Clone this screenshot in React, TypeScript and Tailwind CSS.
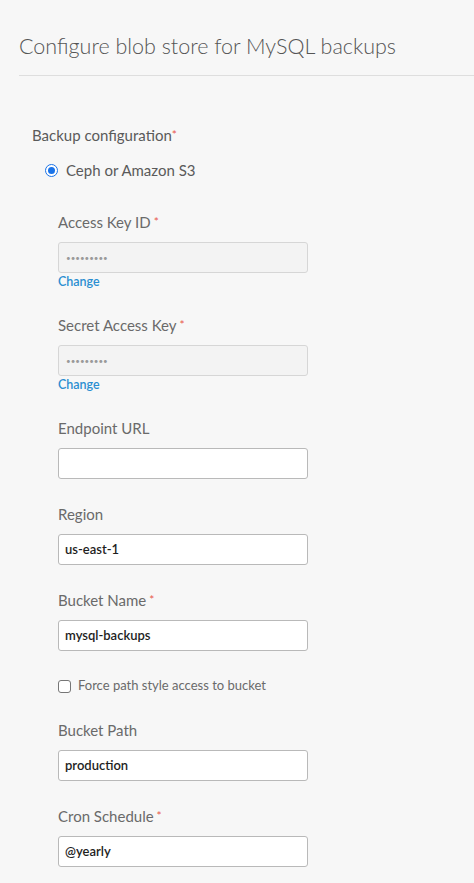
import React from "react";

const font = { fontFamily: '"Source Sans Pro", Lato, "Open Sans", sans-serif' };

function Req() {
  return <span className="text-[#e8574d] text-[12px] align-top ml-[3px]">*</span>;
}

function Field({
  label,
  required,
  value,
  disabled,
  change,
}: {
  label: string;
  required?: boolean;
  value?: string;
  disabled?: boolean;
  change?: boolean;
}) {
  return (
    <div className="mb-[25px]">
      <div className="text-[15px] leading-[20px] text-[#6a6a6a] mb-[10px]">
        {label}
        {required && <Req />}
      </div>
      <div
        className={
          "w-[250px] h-[31px] rounded-[3px] border flex items-center px-[6px] " +
          (disabled ? "bg-[#f3f3f3] border-[#d6d6d6]" : "bg-white border-[#b9b9b9]")
        }
      >
        {disabled ? (
          <span className="text-[#9a9a9a] text-[8px] leading-none pl-[1px]">•••••••••</span>
        ) : (
          <span className="text-[13px] text-[#1e1e1e] font-semibold">{value}</span>
        )}
      </div>
      {change && (
        <div className="text-[12.5px] leading-[17px] text-[#2a8ed1] font-semibold">Change</div>
      )}
    </div>
  );
}

export default function App() {
  return (
    <div className="min-h-[883px] w-[474px] bg-[#f7f7f7] overflow-hidden" style={font}>
      <div className="ml-[19px] pt-[32px] pb-[15px] border-b border-[#dedede]">
        <h1 className="text-[21.5px] leading-[28px] text-[#555] font-light">
          Configure blob store for MySQL backups
        </h1>
      </div>
      <div className="pl-[32px] pt-[49px]">
        <div className="text-[15px] leading-[20px] text-[#5a5a5a]">
          Backup configuration
          <span className="text-[#e8574d] text-[12px] align-top">*</span>
        </div>
        <div className="flex items-center ml-[13px] mt-[15px] h-[20px]">
          <span className="w-[13px] h-[13px] rounded-full border-[1.5px] border-[#1a73e8] flex items-center justify-center bg-white">
            <span className="w-[7px] h-[7px] rounded-full bg-[#1a73e8]" />
          </span>
          <span className="ml-[8px] text-[15px] text-[#5a5a5a]">Ceph or Amazon S3</span>
        </div>
        <div className="ml-[26px] mt-[32px]">
          <Field label="Access Key ID" required disabled change />
          <Field label="Secret Access Key" required disabled change />
          <Field label="Endpoint URL" value="" />
          <Field label="Region" value="us-east-1" />
          <Field label="Bucket Name" required value="mysql-backups" />
          <div className="flex items-center mb-[24px] h-[20px]">
            <span className="w-[13px] h-[13px] rounded-[3px] border border-[#767676] bg-white" />
            <span className="ml-[7px] text-[13px] text-[#6a6a6a]">Force path style access to bucket</span>
          </div>
          <Field label="Bucket Path" value="production" />
          <Field label="Cron Schedule" required value="@yearly" />
        </div>
      </div>
    </div>
  );
}
